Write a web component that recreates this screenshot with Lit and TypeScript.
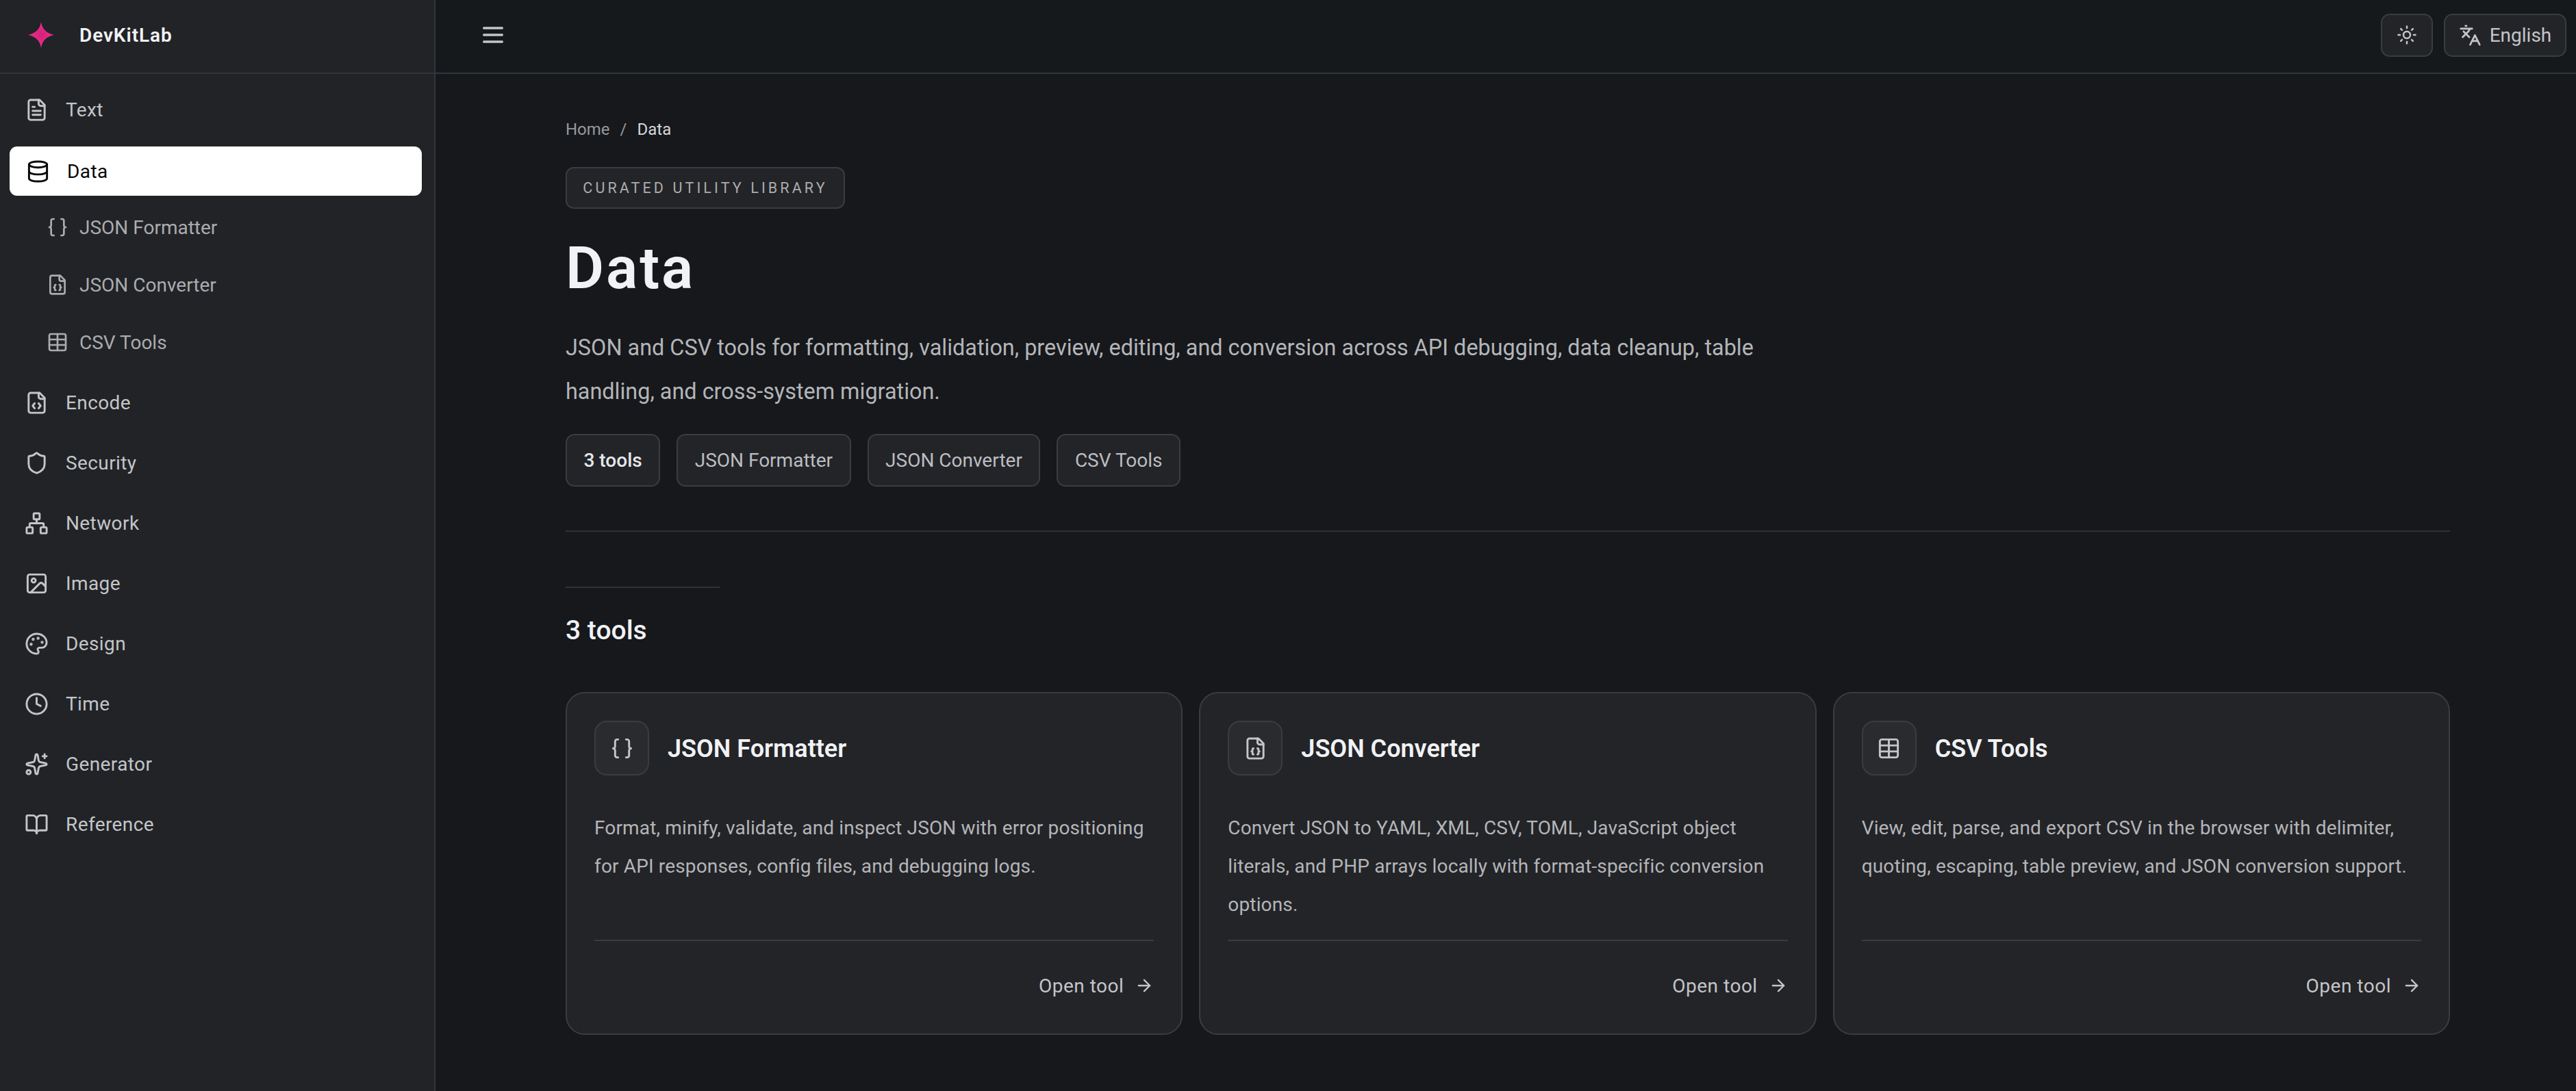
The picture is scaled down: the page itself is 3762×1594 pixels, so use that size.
import { LitElement, html, css, svg } from 'lit';
import { customElement } from 'lit/decorators.js';

const DOC = svg`<path d="M15 2H6a2 2 0 0 0-2 2v16a2 2 0 0 0 2 2h12a2 2 0 0 0 2-2V7Z"/><path d="M14 2v4a2 2 0 0 0 2 2h4"/>`;

const ICONS: Record<string, unknown> = {
  fileText: svg`${DOC}<path d="M10 9H8"/><path d="M16 13H8"/><path d="M16 17H8"/>`,
  database: svg`<ellipse cx="12" cy="5" rx="9" ry="3"/><path d="M3 5V19A9 3 0 0 0 21 19V5"/><path d="M3 12A9 3 0 0 0 21 12"/>`,
  braces: svg`<path d="M8 3H7a2 2 0 0 0-2 2v5a2 2 0 0 1-2 2 2 2 0 0 1 2 2v5c0 1.1.9 2 2 2h1"/><path d="M16 21h1a2 2 0 0 0 2-2v-5c0-1.1.9-2 2-2a2 2 0 0 1-2-2V5a2 2 0 0 0-2-2h-1"/>`,
  fileJson: svg`${DOC}<path d="M10 12a1 1 0 0 0-1 1v1a1 1 0 0 1-1 1 1 1 0 0 1 1 1v1a1 1 0 0 0 1 1"/><path d="M14 18a1 1 0 0 0 1-1v-1a1 1 0 0 1 1-1 1 1 0 0 1-1-1v-1a1 1 0 0 0-1-1"/>`,
  table: svg`<path d="M12 3v18"/><rect width="18" height="18" x="3" y="3" rx="2"/><path d="M3 9h18"/><path d="M3 15h18"/>`,
  fileCode: svg`${DOC}<path d="M10 12.5 8 15l2 2.5"/><path d="m14 12.5 2 2.5-2 2.5"/>`,
  shield: svg`<path d="M20 13c0 5-3.5 7.5-7.66 8.95a1 1 0 0 1-.67-.01C7.5 20.5 4 18 4 13V6a1 1 0 0 1 1-1c2 0 4.5-1.2 6.24-2.72a1.17 1.17 0 0 1 1.52 0C14.51 3.81 17 5 19 5a1 1 0 0 1 1 1z"/>`,
  network: svg`<rect x="16" y="16" width="6" height="6" rx="1"/><rect x="2" y="16" width="6" height="6" rx="1"/><rect x="9" y="2" width="6" height="6" rx="1"/><path d="M5 16v-3a1 1 0 0 1 1-1h12a1 1 0 0 1 1 1v3"/><path d="M12 12V8"/>`,
  image: svg`<rect width="18" height="18" x="3" y="3" rx="2" ry="2"/><circle cx="9" cy="9" r="2"/><path d="m21 15-3.086-3.086a2 2 0 0 0-2.828 0L6 21"/>`,
  palette: svg`<path d="M12 22a1 1 0 0 1 0-20 10 9 0 0 1 10 9 5 5 0 0 1-5 5h-2.25a1.75 1.75 0 0 0-1.4 2.8l.3.4a1.75 1.75 0 0 1-1.4 2.8z"/><circle cx="13.5" cy="6.5" r=".5" fill="currentColor"/><circle cx="17.5" cy="10.5" r=".5" fill="currentColor"/><circle cx="6.5" cy="12.5" r=".5" fill="currentColor"/><circle cx="8.5" cy="7.5" r=".5" fill="currentColor"/>`,
  clock: svg`<circle cx="12" cy="12" r="10"/><path d="M12 6v6l4 2"/>`,
  sparkles: svg`<path d="M11.017 2.814a1 1 0 0 1 1.966 0l1.051 5.558a2 2 0 0 0 1.594 1.594l5.558 1.051a1 1 0 0 1 0 1.966l-5.558 1.051a2 2 0 0 0-1.594 1.594l-1.051 5.558a1 1 0 0 1-1.966 0l-1.051-5.558a2 2 0 0 0-1.594-1.594l-5.558-1.051a1 1 0 0 1 0-1.966l5.558-1.051a2 2 0 0 0 1.594-1.594z"/><path d="M20 2v4"/><path d="M22 4h-4"/><circle cx="4" cy="20" r="2"/>`,
  book: svg`<path d="M12 7v14"/><path d="M3 18a1 1 0 0 1-1-1V4a1 1 0 0 1 1-1h5a4 4 0 0 1 4 4 4 4 0 0 1 4-4h5a1 1 0 0 1 1 1v13a1 1 0 0 1-1 1h-6a3 3 0 0 0-3 3 3 3 0 0 0-3-3z"/>`,
  menu: svg`<path d="M4 12h16"/><path d="M4 18h16"/><path d="M4 6h16"/>`,
  sun: svg`<circle cx="12" cy="12" r="4"/><path d="M12 2v2"/><path d="M12 20v2"/><path d="m4.93 4.93 1.41 1.41"/><path d="m17.66 17.66 1.41 1.41"/><path d="M2 12h2"/><path d="M20 12h2"/><path d="m6.34 17.66-1.41 1.41"/><path d="m19.07 4.93-1.41 1.41"/>`,
  languages: svg`<path d="m5 8 6 6"/><path d="m4 14 6-6 2-3"/><path d="M2 5h12"/><path d="M7 2h1"/><path d="m22 22-5-10-5 10"/><path d="M14 18h6"/>`,
  arrow: svg`<path d="M5 12h14"/><path d="m12 5 7 7-7 7"/>`,
};

function icon(name: string, cls = '') {
  return html`<svg class="icon ${cls}" viewBox="0 0 24 24" fill="none" stroke="currentColor" stroke-width="2" stroke-linecap="round" stroke-linejoin="round">${ICONS[name]}</svg>`;
}

const TOP_BEFORE = [{ label: 'Text', icon: 'fileText' }];
const SUB = [
  { label: 'JSON Formatter', icon: 'braces' },
  { label: 'JSON Converter', icon: 'fileJson' },
  { label: 'CSV Tools', icon: 'table' },
];
const TOP_AFTER = [
  { label: 'Encode', icon: 'fileCode' },
  { label: 'Security', icon: 'shield' },
  { label: 'Network', icon: 'network' },
  { label: 'Image', icon: 'image' },
  { label: 'Design', icon: 'palette' },
  { label: 'Time', icon: 'clock' },
  { label: 'Generator', icon: 'sparkles' },
  { label: 'Reference', icon: 'book' },
];
const CARDS = [
  {
    title: 'JSON Formatter',
    icon: 'braces',
    desc: 'Format, minify, validate, and inspect JSON with error positioning for API responses, config files, and debugging logs.',
  },
  {
    title: 'JSON Converter',
    icon: 'fileJson',
    desc: 'Convert JSON to YAML, XML, CSV, TOML, JavaScript object literals, and PHP arrays locally with format-specific conversion options.',
  },
  {
    title: 'CSV Tools',
    icon: 'table',
    desc: 'View, edit, parse, and export CSV in the browser with delimiter, quoting, escaping, table preview, and JSON conversion support.',
  },
];

@customElement('app-root')
export class AppRoot extends LitElement {
  static styles = css`
    :host {
      display: grid;
      grid-template-columns: 636px 1fr;
      min-height: 1594px;
      background: #16181c;
      color: #f1f2f4;
      font-family: Roboto, 'Noto Sans', sans-serif;
    }
    .icon {
      width: 35px;
      height: 35px;
      flex: none;
      display: block;
    }
    .sidebar {
      background: #212327;
      border-right: 2px solid #33353a;
    }
    .brand {
      height: 108px;
      box-sizing: border-box;
      border-bottom: 2px solid #33353a;
      display: flex;
      align-items: center;
      padding: 0 0 4px 41px;
      gap: 37px;
    }
    .star {
      width: 38px;
      height: 38px;
      flex: none;
    }
    .brand-name {
      font-size: 28px;
      font-weight: 600;
      letter-spacing: 0.9px;
      color: #f1f2f4;
    }
    .nav {
      padding: 16px 18px 0 14px;
      display: flex;
      flex-direction: column;
    }
    .item {
      height: 72px;
      display: flex;
      align-items: center;
      gap: 25px;
      padding-left: 22px;
      margin-bottom: 16px;
      font-size: 28px;
      letter-spacing: 0.4px;
      color: #c4c5c8;
    }
    .item.active {
      background: #fff;
      color: #08090a;
      border-radius: 11px;
      margin: 2px 0 10px;
      padding-left: 24px;
    }
    .sub {
      display: flex;
      flex-direction: column;
      gap: 12px;
      margin: 0 0 16px 31px;
    }
    .sub-item {
      height: 72px;
      display: flex;
      align-items: center;
      gap: 16px;
      padding-left: 23px;
      font-size: 28px;
      color: #abacaf;
      border-radius: 11px;
    }
    .sub-item .icon {
      width: 32px;
      height: 32px;
    }
    .main {
      min-width: 0;
    }
    .topbar {
      height: 108px;
      box-sizing: border-box;
      background: #15191c;
      border-bottom: 2px solid #33353a;
      display: flex;
      align-items: center;
      justify-content: space-between;
      padding: 0 14px 4px 64px;
      color: #c4c5c8;
    }
    .menu {
      width: 40px;
      height: 40px;
    }
    .actions {
      display: flex;
      gap: 16px;
    }
    .tbtn {
      height: 63px;
      box-sizing: border-box;
      background: #232428;
      border: 2px solid #3a3c41;
      border-radius: 13px;
      display: flex;
      align-items: center;
      justify-content: center;
      font-size: 28px;
      color: #c4c5c8;
    }
    .tbtn.theme {
      width: 76px;
    }
    .tbtn.theme .icon {
      width: 30px;
      height: 30px;
    }
    .tbtn.lang {
      width: 179px;
      gap: 12px;
    }
    .tbtn.lang .icon {
      width: 33px;
      height: 33px;
    }
    .content {
      padding: 64px 184px 0 190px;
    }
    .crumbs {
      height: 34px;
      display: flex;
      align-items: center;
      gap: 15px;
      font-size: 24px;
      color: #98999d;
    }
    .crumbs .cur {
      color: #d5d6d8;
    }
    .badge {
      display: inline-flex;
      align-items: center;
      box-sizing: border-box;
      height: 61px;
      width: 408px;
      justify-content: center;
      margin-top: 38px;
      background: #232428;
      border: 2px solid #3a3c41;
      border-radius: 12px;
      font-size: 21.5px;
      letter-spacing: 4.1px;
      color: #abacaf;
      white-space: nowrap;
    }
    h1 {
      margin: 37px 0 0;
      font-size: 86px;
      line-height: 100px;
      font-weight: 600;
      letter-spacing: 3px;
      color: #f1f2f4;
    }
    .lead {
      margin: 34px 0 0;
      max-width: 1780px;
      font-size: 32.4px;
      line-height: 64px;
      color: #b4b5b8;
    }
    .chips {
      display: flex;
      gap: 24px;
      margin-top: 30px;
    }
    .chip {
      height: 77px;
      box-sizing: border-box;
      display: flex;
      align-items: center;
      padding: 0 24.5px;
      background: #232428;
      border: 2px solid #3a3c41;
      border-radius: 13px;
      font-size: 28px;
      color: #bcbdc0;
    }
    .chip.count {
      color: #e6e7e9;
      font-weight: 500;
    }
    .rule {
      height: 2px;
      background: #303237;
      margin-top: 64px;
    }
    .short {
      width: 225px;
      height: 2px;
      background: #303237;
      margin-top: 80px;
    }
    h2 {
      margin: 37px 0 0;
      font-size: 39px;
      line-height: 50px;
      font-weight: 500;
      color: #f1f2f4;
    }
    .cards {
      display: grid;
      grid-template-columns: repeat(3, 1fr);
      gap: 24px;
      margin-top: 65px;
    }
    .card {
      display: flex;
      flex-direction: column;
      box-sizing: border-box;
      padding: 40px 40px 50px;
      background: #232428;
      border: 2px solid #3a3c41;
      border-radius: 28px;
    }
    .card-head {
      display: flex;
      align-items: center;
      gap: 27px;
    }
    .card-icon {
      width: 80px;
      height: 80px;
      box-sizing: border-box;
      display: flex;
      align-items: center;
      justify-content: center;
      background: #2a2b2f;
      border: 2px solid #3a3c41;
      border-radius: 18px;
      color: #c4c5c8;
    }
    h3 {
      margin: 0;
      padding-top: 2px;
      font-size: 36px;
      font-weight: 600;
      color: #f1f2f4;
    }
    .desc {
      flex: 1;
      margin: 49px 0 0;
      min-height: 168px;
      font-size: 28px;
      letter-spacing: 0.15px;
      line-height: 56px;
      color: #b4b5b8;
    }
    .foot {
      margin-top: 23px;
      border-top: 2px solid #3a3c41;
      padding-top: 45px;
      height: 40px;
      display: flex;
      align-items: center;
      justify-content: flex-end;
      gap: 16px;
      font-size: 28px;
      letter-spacing: 0.5px;
      color: #c4c5c8;
    }
    .foot .icon {
      width: 28px;
      height: 28px;
    }
  `;

  render() {
    return html`
      <aside class="sidebar">
        <div class="brand">
          <svg class="star" viewBox="0 0 38 38">
            <defs>
              <radialGradient id="pink">
                <stop offset="0" stop-color="#d4217a" />
                <stop offset="1" stop-color="#ef2f8d" />
              </radialGradient>
            </defs>
            <path d="M19 0C20.5 10 27 17 38 19C27 21 20.5 28 19 38C17.5 28 11 21 0 19C11 17 17.5 10 19 0Z" fill="url(#pink)" />
          </svg>
          <span class="brand-name">DevKitLab</span>
        </div>
        <nav class="nav">
          ${TOP_BEFORE.map((n) => html`<div class="item">${icon(n.icon)}<span>${n.label}</span></div>`)}
          <div class="item active">${icon('database')}<span>Data</span></div>
          <div class="sub">
            ${SUB.map((n) => html`<div class="sub-item">${icon(n.icon)}<span>${n.label}</span></div>`)}
          </div>
          ${TOP_AFTER.map((n) => html`<div class="item">${icon(n.icon)}<span>${n.label}</span></div>`)}
        </nav>
      </aside>
      <div class="main">
        <header class="topbar">
          ${icon('menu', 'menu')}
          <div class="actions">
            <div class="tbtn theme">${icon('sun')}</div>
            <div class="tbtn lang">${icon('languages')}<span>English</span></div>
          </div>
        </header>
        <main class="content">
          <div class="crumbs"><span>Home</span><span>/</span><span class="cur">Data</span></div>
          <div class="badge">CURATED UTILITY LIBRARY</div>
          <h1>Data</h1>
          <p class="lead">JSON and CSV tools for formatting, validation, preview, editing, and conversion across API debugging, data cleanup, table handling, and cross-system migration.</p>
          <div class="chips">
            <div class="chip count">3 tools</div>
            ${SUB.map((n) => html`<div class="chip">${n.label}</div>`)}
          </div>
          <div class="rule"></div>
          <div class="short"></div>
          <h2>3 tools</h2>
          <div class="cards">
            ${CARDS.map(
              (c) => html`
                <article class="card">
                  <div class="card-head">
                    <div class="card-icon">${icon(c.icon)}</div>
                    <h3>${c.title}</h3>
                  </div>
                  <p class="desc">${c.desc}</p>
                  <div class="foot"><span>Open tool</span>${icon('arrow')}</div>
                </article>
              `
            )}
          </div>
        </main>
      </div>
    `;
  }
}
